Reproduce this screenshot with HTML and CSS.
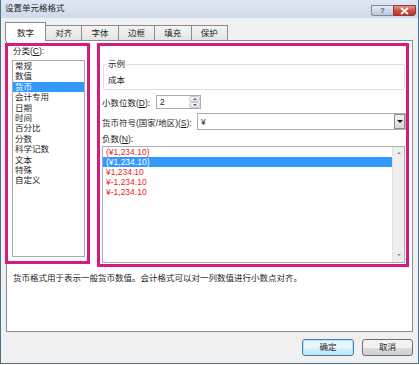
FILE: index.html
```html
<!DOCTYPE html>
<html lang="zh-CN">
<head>
  <meta charset="UTF-8">
  <title>设置单元格格式</title>
  <link rel="stylesheet" href="styles.css">
</head>
<body>
<div class="window">
  <div class="titlebar">
    <span class="title">设置单元格格式</span>
    <span class="cap help">?</span>
    <span class="cap close">
      <svg width="11" height="8" viewBox="0 0 11 8"><path d="M2 1 L9 7 M9 1 L2 7" stroke="#fff" stroke-width="1.8"/></svg>
    </span>
  </div>

  <div class="tabs">
    <span class="tab active">数字</span>
    <span class="tab">对齐</span>
    <span class="tab">字体</span>
    <span class="tab">边框</span>
    <span class="tab">填充</span>
    <span class="tab">保护</span>
  </div>

  <div class="panel">
    <div class="panel-top">
      <!-- category list -->
      <div class="box box-left">
        <div class="label">分类(<u>C</u>):</div>
        <ul class="list cat-list">
          <li>常规</li>
          <li>数值</li>
          <li class="selected">货币</li>
          <li>会计专用</li>
          <li>日期</li>
          <li>时间</li>
          <li>百分比</li>
          <li>分数</li>
          <li>科学记数</li>
          <li>文本</li>
          <li>特殊</li>
          <li>自定义</li>
        </ul>
      </div>

      <!-- currency options -->
      <div class="box box-right">
        <div class="group">
          <div class="group-title">示例</div>
          <div class="group-body">成本</div>
        </div>

        <div class="row row-decimals">
          <span class="row-label w-dec">小数位数(<u>D</u>):</span>
          <div class="spin">
            <span class="spin-value">2</span>
            <span class="spin-btns">
              <span class="spin-btn"><i class="tri-up"></i></span>
              <span class="spin-btn"><i class="tri-down"></i></span>
            </span>
          </div>
        </div>

        <div class="row row-symbol">
          <span class="row-label w-sym">货币符号(国家/地区)(<u>S</u>):</span>
          <div class="select">
            <span class="select-value">¥</span>
            <span class="select-btn"><i class="tri-down dark"></i></span>
          </div>
        </div>

        <div class="label neg-label">负数(<u>N</u>):</div>
        <div class="neg-box">
          <ul class="list neg-list">
            <li class="red">(¥1,234.10)</li>
            <li class="selected">(¥1,234.10)</li>
            <li class="red">¥1,234.10</li>
            <li class="red">¥-1,234.10</li>
            <li class="red">¥-1,234.10</li>
          </ul>
          <div class="scrollbar">
            <i class="tri-up small"></i>
            <i class="tri-down small"></i>
          </div>
        </div>
      </div>
    </div>

    <p class="desc">货币格式用于表示一般货币数值。会计格式可以对一列数值进行小数点对齐。</p>
  </div>

  <div class="footer">
    <button class="btn default">确定</button>
    <button class="btn">取消</button>
  </div>
</div>
</body>
</html>
```

FILE: styles.css
```css
body {
  margin: 0;
  font-family: "Liberation Sans", "Noto Sans CJK SC", sans-serif;
  font-size: 8.5px;
  color: #1e1e1e;
  background: #fff;
}
ul {
  list-style: none;
  margin: 0;
  padding: 0;
}
u {
  text-decoration: underline;
}

.window {
  width: 419px;
  height: 364px;
  box-sizing: border-box;
  border: 1px solid #4d7287;
  border-top: none;
  background: #f0f0f0;
}

/* title bar */
.titlebar {
  height: 18px;
  display: flex;
  background: linear-gradient(#dfe8f4, #cddbeb);
}
.title {
  padding-left: 4px;
  line-height: 17px;
  flex: 1;
}
.cap {
  margin-top: 5px;
  height: 11px;
  box-sizing: border-box;
  border: 1px solid #7a8a9c;
  display: flex;
  align-items: center;
  justify-content: center;
}
.help {
  width: 22px;
  border-right: none;
  border-radius: 0 0 0 3px;
  background: linear-gradient(#e6edf6, #b9c9dc);
  color: #555f6d;
  font-size: 8px;
  font-weight: bold;
  line-height: 9px;
}
.close {
  width: 23px;
  margin-right: 2px;
  border-color: #8d3a32;
  border-radius: 0 0 3px 0;
  background: linear-gradient(#e59a8e, #c84d3d 55%, #c0392b);
}

/* tabs */
.tabs {
  position: relative;
  z-index: 1;
  height: 23px;
  margin-bottom: -1px;
  padding-left: 4px;
  display: flex;
  align-items: flex-end;
}
.tab {
  width: 37.4px;
  height: 15px;
  margin-bottom: 1px;
  margin-left: -1px;
  box-sizing: border-box;
  border: 1px solid #898c95;
  border-bottom: none;
  background: linear-gradient(#f4f4f4, #e4e4e4);
  text-align: center;
  line-height: 14px;
}
.tab.active {
  width: 41px;
  height: 19px;
  margin: 0;
  padding-top: 3px;
  background: #fff;
}
.tab.active + .tab {
  margin-left: -1px;
}

/* main panel */
.panel {
  margin: 0 5px;
  height: 292px;
  box-sizing: border-box;
  border: 1px solid #898c95;
  background: #fff;
}
.panel-top {
  display: flex;
  align-items: flex-start;
  padding-top: 2px;
}
.box {
  border: 3px solid #d61a7f;
  box-sizing: border-box;
}
.box-left {
  width: 85px;
  height: 221px;
  margin-left: -2px;
}
.box-right {
  width: 312px;
  height: 224px;
  margin-left: 7px;
}
.label {
  line-height: 10px;
}
.box-left .label {
  padding-left: 5px;
}

.list li {
  white-space: nowrap;
}
.list li.selected {
  background: #3399ff;
  color: #fff;
}
.cat-list {
  margin: 4px 0 0 4px;
  width: 73px;
  height: 197px;
  box-sizing: border-box;
  border: 1px solid #a8acb4;
  padding-top: 0;
}
.cat-list li {
  line-height: 10.4px;
  padding-left: 2px;
}

/* sample group */
.group {
  margin: 18px 1px 0 3px;
  height: 26px;
  box-sizing: border-box;
  border: 1px solid #dadee3;
  border-radius: 2px;
}
.group-title {
  width: fit-content;
  height: 10px;
  margin: -6px 0 0 3px;
  padding: 0 1px;
  background: #fff;
  line-height: 10px;
}
.group-body {
  margin-top: 6px;
  padding-left: 4px;
  line-height: 10px;
}

/* form rows */
.row {
  display: flex;
  align-items: center;
  padding-left: 2px;
}
.row-decimals {
  margin-top: 5px;
  height: 14px;
}
.row-symbol {
  margin-top: 4px;
  height: 17px;
}
.w-dec {
  width: 54px;
}
.w-sym {
  width: 95px;
}
.spin,
.select {
  height: 100%;
  box-sizing: border-box;
  border: 1px solid #abadb3;
  display: flex;
  align-items: center;
}
.spin {
  width: 45px;
}
.spin-value,
.select-value {
  flex: 1;
  padding-left: 3px;
}
.spin-btns {
  width: 11px;
  height: 100%;
  display: flex;
  flex-direction: column;
}
.spin-btn {
  flex: 1;
  border: 1px solid #c9ccd2;
  border-radius: 2px;
  background: linear-gradient(#f6f6f6, #e2e4e8);
  display: flex;
  align-items: center;
  justify-content: center;
}
.select {
  width: 209px;
}
.select-btn {
  width: 11px;
  height: 15px;
  box-sizing: border-box;
  border: 1px solid #8d8f94;
  background: linear-gradient(#f2f2f2, #d6d6d6);
  display: flex;
  align-items: center;
  justify-content: center;
}

.tri-up,
.tri-down {
  display: block;
  width: 0;
  height: 0;
  border-left: 2px solid transparent;
  border-right: 2px solid transparent;
}
.tri-up {
  border-bottom: 2px solid #4c607a;
}
.tri-down {
  border-top: 2px solid #4c607a;
}
.tri-down.dark {
  border-left-width: 3px;
  border-right-width: 3px;
  border-top: 3px solid #111;
}

.neg-label {
  margin-top: 4px;
  padding-left: 2px;
}
.neg-box {
  margin: 2px 1px 0 2px;
  height: 117px;
  box-sizing: border-box;
  border: 1px solid #a8acb4;
  display: flex;
}
.neg-list {
  flex: 1;
}
.neg-list li {
  line-height: 10px;
  padding-left: 3px;
}
.neg-list li.red {
  color: #ec1c1c;
}
.scrollbar {
  width: 12px;
  background: #eeeeee;
  border-left: 1px solid #e2e2e2;
  display: flex;
  flex-direction: column;
  align-items: center;
  justify-content: space-between;
  padding: 5px 0 6px;
  box-sizing: border-box;
}
.tri-up.small {
  border-bottom-color: #8a8a8a;
}
.tri-down.small {
  border-top-color: #8a8a8a;
}

.desc {
  margin: 6px 0 0;
  padding-left: 6px;
  line-height: 10px;
}

/* buttons */
.footer {
  display: flex;
  justify-content: flex-end;
  gap: 8px;
  padding: 7px 5px 0 0;
}
.btn {
  width: 51px;
  height: 17px;
  padding: 0;
  font: inherit;
  color: #1e1e1e;
  border: 1px solid #707070;
  border-radius: 3px;
  background: linear-gradient(#f2f2f2 50%, #dddddd 50%, #cfcfcf);
  line-height: 15px;
}
.btn.default {
  width: 52px;
  border-color: #3c7fb1;
  box-shadow: inset 0 0 0 1px #b6e3fb;
  background: linear-gradient(#eaf6fd 50%, #d9f0fc 50%, #bee6fd);
}
```
